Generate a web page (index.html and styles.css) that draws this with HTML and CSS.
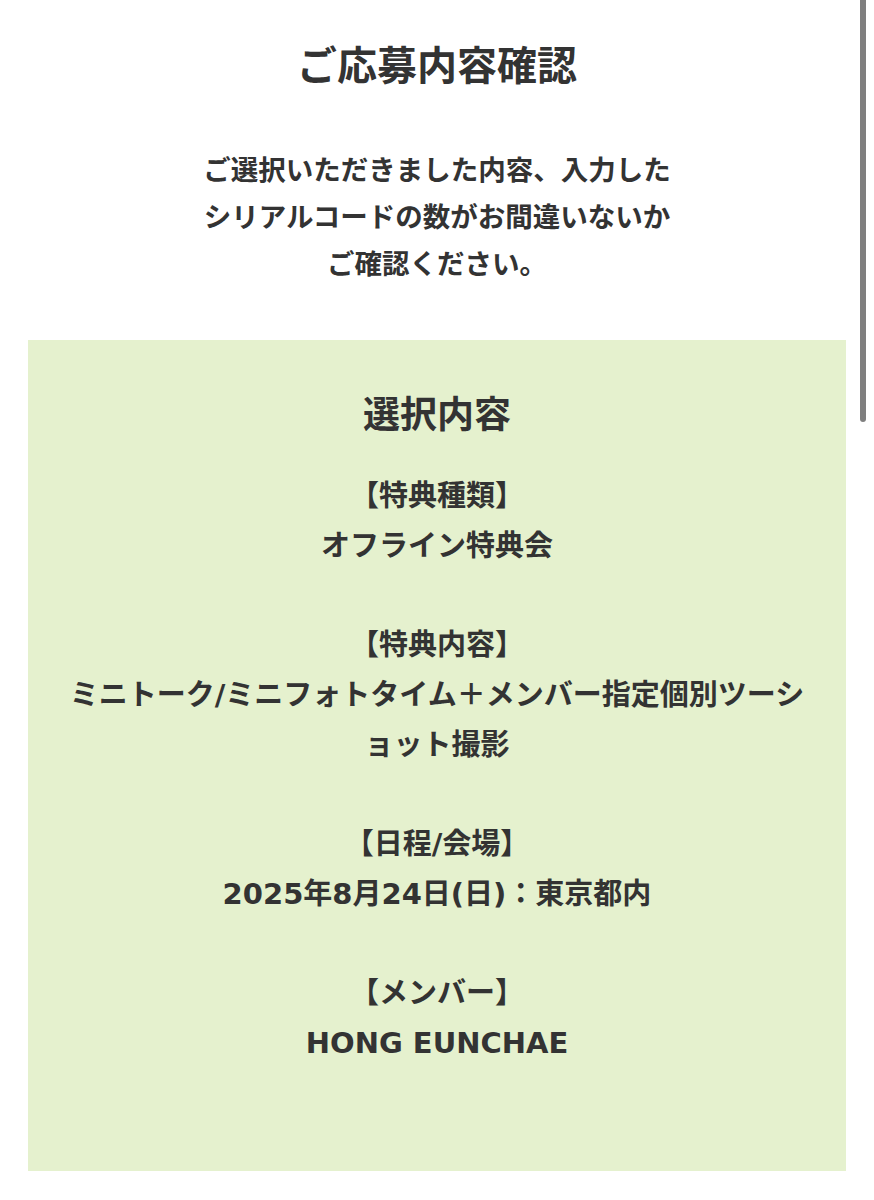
FILE: index.html
```html
<!DOCTYPE html>
<html lang="ja">
<head>
<meta charset="utf-8">
<title>ご応募内容確認</title>
<link rel="stylesheet" href="styles.css">
</head>
<body>
<main class="page">
  <h1 class="title">ご応募内容確認</h1>
  <p class="lead">ご選択いただきました内容、入力したシリアルコードの数がお間違いないかご確認ください。</p>
  <section class="summary">
    <h2 class="summary-title">選択内容</h2>
    <dl class="items">
      <div class="item">
        <dt>【特典種類】</dt>
        <dd>オフライン特典会</dd>
      </div>
      <div class="item">
        <dt>【特典内容】</dt>
        <dd>ミニトーク/ミニフォトタイム＋メンバー指定個別ツーショット撮影</dd>
      </div>
      <div class="item">
        <dt>【日程/会場】</dt>
        <dd>2025年8月24日(日)：東京都内</dd>
      </div>
      <div class="item">
        <dt>【メンバー】</dt>
        <dd>HONG EUNCHAE</dd>
      </div>
    </dl>
  </section>
</main>
<div class="scrollbar"></div>
</body>
</html>
```

FILE: styles.css
```css
html, body {
  margin: 0;
  padding: 0;
  background: #ffffff;
}

body {
  font-family: "Noto Sans CJK JP", "Noto Sans", sans-serif;
  color: #333333;
}

.page {
  padding-top: 35px;
  padding-bottom: 28px;
}

.title {
  margin: 0;
  font-size: 40px;
  line-height: 56px;
  font-weight: 700;
  text-align: center;
}

.lead {
  margin: 54px auto 0;
  max-width: 490px;
  font-size: 27.5px;
  line-height: 47px;
  font-weight: 700;
  text-align: center;
}

.summary {
  margin: 54px 28px 0;
  padding: 49px 34px 103px;
  background: #e5f1ce;
  text-align: center;
  line-break: loose;
  font-family: "DejaVu Sans", "Noto Sans CJK JP", sans-serif;
}

.summary-title {
  margin: 0;
  font-size: 37px;
  line-height: 54px;
  font-weight: 700;
}

.items {
  margin: 28px 0 0;
  display: flex;
  flex-direction: column;
  gap: 49px;
}

.item dt,
.item dd {
  margin: 0;
  font-size: 29px;
  line-height: 50px;
  font-weight: 700;
}

.scrollbar {
  position: fixed;
  top: 0;
  right: 8px;
  width: 6px;
  height: 422px;
  background: #7f7f7f;
  border-radius: 0 0 3px 3px;
}
```
